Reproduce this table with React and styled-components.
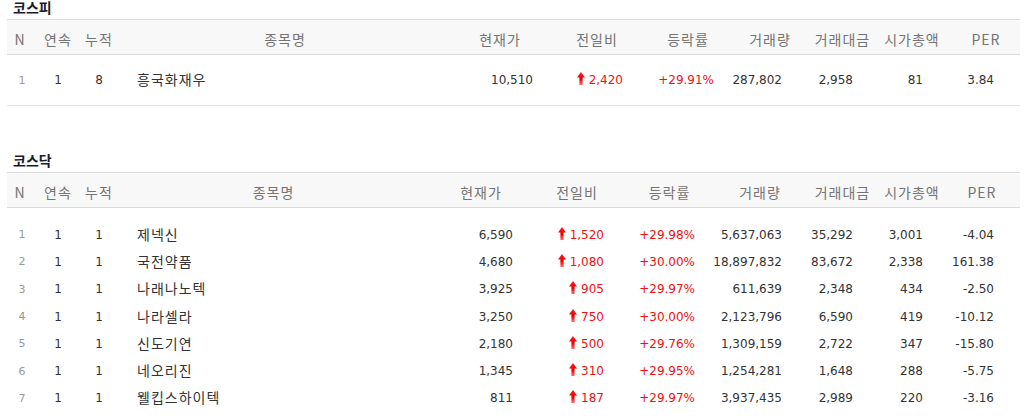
import React from 'react';
import styled, { createGlobalStyle } from 'styled-components';

const GlobalStyle = createGlobalStyle`
  html, body {
    margin: 0;
    padding: 0;
    background: #fff;
    overflow: hidden;
  }
`;

const Page = styled.div`
  padding-left: 7px;
  width: 1013px;
  font-family: "Noto Sans CJK KR", "Noto Sans", sans-serif;
`;

const Section = styled.section`
  margin-top: ${(p) => p.$gap || 0}px;
`;

const Title = styled.h2`
  margin: 0 0 3px 6px;
  height: 16px;
  line-height: 14px;
  font-size: 14px;
  font-weight: 700;
  color: #1a1a2a;
`;

const Grid = styled.div`
  display: grid;
  grid-template-columns: ${(p) => p.$cols};
  align-items: center;
`;

const HeadRow = styled(Grid)`
  height: 34px;
  background: #f8f8f8;
  border-top: 1px solid #dcdcdc;
  border-bottom: 1px solid #dcdcdc;
`;

const HeadCell = styled.div`
  display: flex;
  justify-content: center;
  white-space: nowrap;
  font-size: 14px;
  letter-spacing: 1px;
  color: #747474;
  padding-top: 3px;
`;

const Body = styled.div`
  padding-top: ${(p) => p.$pt}px;
  border-bottom: ${(p) => (p.$line ? '1px solid #e2e2e2' : 'none')};
`;

const Row = styled(Grid)`
  height: ${(p) => p.$h}px;
`;

const Cell = styled.div`
  white-space: nowrap;
  font-family: "DejaVu Sans", Verdana, sans-serif;
  font-size: 12px;
  color: ${(p) => (p.$red ? '#f01010' : '#333')};
  padding-right: ${(p) => p.$pr || 0}px;
  display: flex;
  align-items: center;
  justify-content: ${(p) =>
    p.$align === 'center' ? 'center' : p.$align === 'left' ? 'flex-start' : 'flex-end'};
`;

const NoCell = styled(Cell)`
  font-size: 11px;
  color: #999;
  padding-left: 4px;
`;

const NameCell = styled.div`
  padding-left: 22px;
  margin-top: -2px;
  font-size: 14px;
  letter-spacing: 1px;
  color: #333;
  white-space: nowrap;
`;

const Arrow = styled.svg`
  width: 8px;
  height: 13px;
  margin-right: 4px;
  margin-top: -3px;
`;

const UpArrow = ({ id }) => (
  <Arrow viewBox="0 0 8 13">
    <defs>
      <linearGradient id={id} x1="0" y1="0" x2="0" y2="1">
        <stop offset="0" stopColor="#ff2020" />
        <stop offset="0.55" stopColor="#e60000" />
        <stop offset="1" stopColor="#ff7070" />
      </linearGradient>
    </defs>
    <path d="M4 0 L8 5.5 L5.6 5.5 L5.6 13 L2.4 13 L2.4 5.5 L0 5.5 Z" fill={`url(#${id})`} />
  </Arrow>
);

const HEADERS = ['N', '연속', '누적', '종목명', '현재가', '전일비', '등락률', '거래량', '거래대금', '시가총액', 'PER'];

const KOSPI_COLS = { w: [26, 50, 32, 340, 90, 104, 78, 86, 59, 80, 68], pr: [12, 26, 13, 31, 19, 29, 26] };
const KOSDAQ_COLS = { w: [26, 50, 32, 317, 98, 94, 91, 90, 75, 64, 76], pr: [17, 20, 20, 23, 27, 21, 26] };

const kospi = [['1', '1', '8', '흥국화재우', '10,510', '2,420', '+29.91%', '287,802', '2,958', '81', '3.84']];

const kosdaq = [
  ['1', '1', '1', '제넥신', '6,590', '1,520', '+29.98%', '5,637,063', '35,292', '3,001', '-4.04'],
  ['2', '1', '1', '국전약품', '4,680', '1,080', '+30.00%', '18,897,832', '83,672', '2,338', '161.38'],
  ['3', '1', '1', '나래나노텍', '3,925', '905', '+29.97%', '611,639', '2,348', '434', '-2.50'],
  ['4', '1', '1', '나라셀라', '3,250', '750', '+30.00%', '2,123,796', '6,590', '419', '-10.12'],
  ['5', '1', '1', '신도기연', '2,180', '500', '+29.76%', '1,309,159', '2,722', '347', '-15.80'],
  ['6', '1', '1', '네오리진', '1,345', '310', '+29.95%', '1,254,281', '1,648', '288', '-5.75'],
  ['7', '1', '1', '웰킵스하이텍', '811', '187', '+29.97%', '3,937,435', '2,989', '220', '-3.16'],
];

const StockTable = ({ name, cols, rows, rowH, pt, line }) => {
  const template = cols.w.map((w) => `${w}px`).join(' ');
  return (
    <>
      <HeadRow $cols={template}>
        {HEADERS.map((h) => (
          <HeadCell key={h}>{h}</HeadCell>
        ))}
      </HeadRow>
      <Body $pt={pt} $line={line}>
        {rows.map((r) => (
          <Row key={name + r[0]} $cols={template} $h={rowH}>
            <NoCell $align="center">{r[0]}</NoCell>
            <Cell $align="center">{r[1]}</Cell>
            <Cell $align="center">{r[2]}</Cell>
            <NameCell>{r[3]}</NameCell>
            <Cell $pr={cols.pr[0]}>{r[4]}</Cell>
            <Cell $pr={cols.pr[1]} $red>
              <UpArrow id={`up-${name}-${r[0]}`} />
              {r[5]}
            </Cell>
            <Cell $pr={cols.pr[2]} $red>{r[6]}</Cell>
            <Cell $pr={cols.pr[3]}>{r[7]}</Cell>
            <Cell $pr={cols.pr[4]}>{r[8]}</Cell>
            <Cell $pr={cols.pr[5]}>{r[9]}</Cell>
            <Cell $pr={cols.pr[6]}>{r[10]}</Cell>
          </Row>
        ))}
      </Body>
    </>
  );
};

export default function App() {
  return (
    <>
      <GlobalStyle />
      <Page>
        <Section>
          <Title>코스피</Title>
          <StockTable name="kospi" cols={KOSPI_COLS} rows={kospi} rowH={50} pt={0} line />
        </Section>
        <Section $gap={47}>
          <Title>코스닥</Title>
          <StockTable name="kosdaq" cols={KOSDAQ_COLS} rows={kosdaq} rowH={27.3} pt={13} />
        </Section>
      </Page>
    </>
  );
}
